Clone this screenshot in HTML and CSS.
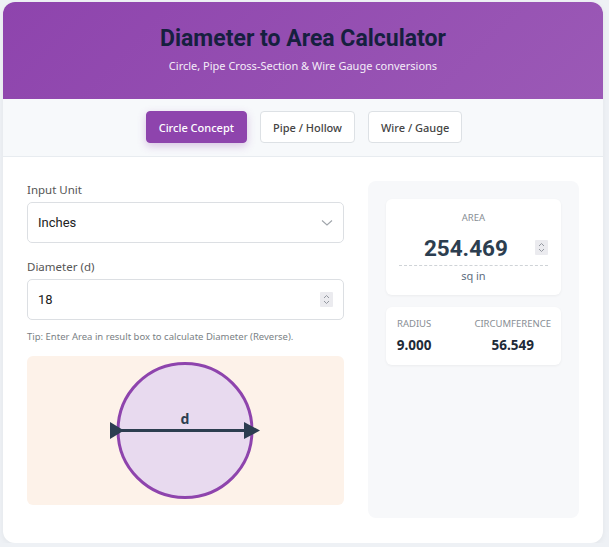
FILE: index.html
```html
<!DOCTYPE html>
<html lang="en">
<head>
<meta charset="utf-8">
<title>Diameter to Area Calculator</title>
<link rel="stylesheet" href="styles.css">
</head>
<body>
<div class="card">
  <header class="header">
    <h1 class="title">Diameter to Area Calculator</h1>
    <p class="subtitle">Circle, Pipe Cross-Section &amp; Wire Gauge conversions</p>
  </header>
  <nav class="tabs">
    <button class="tab active">Circle Concept</button>
    <button class="tab">Pipe / Hollow</button>
    <button class="tab">Wire / Gauge</button>
  </nav>
  <main class="main">
    <section class="inputs">
      <label class="label">Input Unit</label>
      <div class="field">
        <span class="field-text">Inches</span>
        <svg class="chev" width="12" height="8" viewBox="0 0 12 8"><path d="M1 1.5 L6 6 L11 1.5" fill="none" stroke="#a0a5ab" stroke-width="1.1"/></svg>
      </div>
      <label class="label second">Diameter (d)</label>
      <div class="field">
        <input class="field-input" type="text" size="4" value="18">
        <span class="spin"><svg width="7" height="11" viewBox="0 0 7 11"><path d="M1 4 L3.5 1.5 L6 4 M1 7 L3.5 9.5 L6 7" fill="none" stroke="#8a8f96" stroke-width="0.9"/></svg></span>
      </div>
      <p class="tip">Tip: Enter Area in result box to calculate Diameter (Reverse).</p>
      <div class="diagram">
        <svg width="317" height="149" viewBox="0 0 317 149">
          <circle cx="158" cy="74.5" r="67" fill="#e8daef" stroke="#8e44ad" stroke-width="3"/>
          <line x1="92" y1="74.5" x2="222" y2="74.5" stroke="#2c3e50" stroke-width="3"/>
          <polygon points="83,66 97,74.5 83,83" fill="#2c3e50"/>
          <polygon points="217,66 233,74.5 217,83" fill="#2c3e50"/>
          <text x="158" y="68" text-anchor="middle" class="dlabel">d</text>
        </svg>
      </div>
    </section>
    <aside class="results">
      <div class="res-card area">
        <div class="res-label">AREA</div>
        <div class="area-row">
          <input class="area-value" type="text" size="4" value="254.469">
          <span class="spin"><svg width="7" height="11" viewBox="0 0 7 11"><path d="M1 4 L3.5 1.5 L6 4 M1 7 L3.5 9.5 L6 7" fill="none" stroke="#8a8f96" stroke-width="0.9"/></svg></span>
        </div>
        <div class="unit">sq in</div>
      </div>
      <div class="res-card stats">
        <div class="stat">
          <div class="res-label">RADIUS</div>
          <div class="stat-value">9.000</div>
        </div>
        <div class="stat">
          <div class="res-label">CIRCUMFERENCE</div>
          <div class="stat-value">56.549</div>
        </div>
      </div>
    </aside>
  </main>
</div>
</body>
</html>
```
FILE: styles.css
```css
* { box-sizing: border-box; }
html, body { margin: 0; padding: 0; }
body {
  background: #eef1f5;
  font-family: "Noto Sans", "Open Sans", sans-serif;
  color: #2c3e50;
}
.card {
  width: 600px;
  height: 541px;
  margin: 2px 0 0 3px;
  background: #ffffff;
  border-radius: 12px;
  overflow: hidden;
  box-shadow: 0 2px 6px rgba(0,0,0,0.05);
}
.header {
  height: 97px;
  background: linear-gradient(135deg, #8e44ad 0%, #9b59b6 100%);
  text-align: center;
  padding-top: 23px;
}
.title {
  margin: 0;
  font-family: Roboto, sans-serif;
  font-weight: 700;
  font-size: 23px;
  line-height: 28px;
  color: #16203f;
}
.subtitle {
  margin: 6px 0 0;
  font-size: 11px;
  line-height: 14px;
  color: #f4ecf8;
}
.tabs {
  height: 58px;
  background: #f7f9fb;
  border-bottom: 1px solid #e8ecf0;
  display: flex;
  justify-content: center;
  align-items: flex-start;
  gap: 13px;
  padding-top: 12px;
  padding-left: 2px;
}
.tab {
  height: 32px;
  padding: 0 12px;
  font-family: "Noto Sans", sans-serif;
  font-size: 11px;
  font-weight: 500;
  color: #444;
  background: #ffffff;
  border: 1px solid #dde1e5;
  border-radius: 4px;
}
.tab.active {
  background: #8e44ad;
  border-color: #8e44ad;
  color: #ffffff;
  box-shadow: 0 3px 8px rgba(142,68,173,0.3);
}
.main {
  display: grid;
  grid-template-columns: minmax(0, 1.5fr) minmax(0, 1fr);
  gap: 24px;
  padding: 24px 24px 25px 24px;
  height: 386px;
}
.inputs { display: flex; flex-direction: column; min-width: 0; }
.label {
  font-size: 11.5px;
  line-height: 18px;
  color: #555;
  margin-bottom: 3px;
}
.label.second { margin-top: 15px; }
.field {
  display: flex;
  align-items: center;
  height: 41px;
  border: 1px solid #dcdfe3;
  border-radius: 5px;
  background: #fff;
  padding: 0 10px 0 10px;
}
.field-text, .field-input {
  flex: 1;
  min-width: 0;
  width: 0;
  font-family: Roboto, sans-serif;
  font-size: 13px;
  color: #222;
}
.field-input {
  border: none;
  outline: none;
  padding: 0;
  background: transparent;
}
.spin {
  display: flex;
  align-items: center;
  justify-content: center;
  flex: none;
  width: 13px;
  height: 15px;
  background: #ebebef;
  border-radius: 1px;
}
.spin svg { display: block; }
.tip {
  margin: 10px 0 0;
  font-size: 9.5px;
  line-height: 14px;
  color: #7a7f85;
}
.diagram {
  margin-top: 12px;
  height: 149px;
  background: #fdf2e9;
  border-radius: 6px;
  overflow: hidden;
}
.diagram svg { display: block; }
.dlabel {
  font-family: "Noto Sans", sans-serif;
  font-weight: 700;
  font-size: 14px;
  fill: #2c3e50;
}
.results {
  min-width: 0;
  background: #f7f8fa;
  border-radius: 8px;
  padding: 18px;
  display: flex;
  flex-direction: column;
  gap: 12px;
}
.res-card {
  background: #fff;
  border-radius: 6px;
  box-shadow: 0 1px 3px rgba(0,0,0,0.05);
}
.area {
  height: 96px;
  text-align: center;
  padding: 13px 13px 0;
}
.res-label {
  font-size: 9.5px;
  line-height: 12px;
  color: #888e94;
}
.area-row {
  display: flex;
  align-items: center;
  gap: 2px;
  margin-top: 6px;
  height: 36px;
  border-bottom: 1px dashed #cfd3d7;
}
.area-value {
  flex: 1;
  min-width: 0;
  width: 0;
  border: none;
  text-align: center;
  font-family: Roboto, sans-serif;
  font-weight: 700;
  font-size: 22.5px;
  color: #2c3e50;
  background: transparent;
  outline: none;
  padding: 0;
}
.unit {
  margin-top: 3px;
  font-size: 11px;
  line-height: 14px;
  color: #5d6d7e;
}
.stats {
  height: 58px;
  display: flex;
  justify-content: space-between;
  padding: 11px 10px 0 11px;
}
.stat { text-align: center; }
.stat-value {
  margin-top: 6px;
  font-weight: 700;
  font-size: 13.5px;
  line-height: 18px;
  color: #1e2a38;
}
```
